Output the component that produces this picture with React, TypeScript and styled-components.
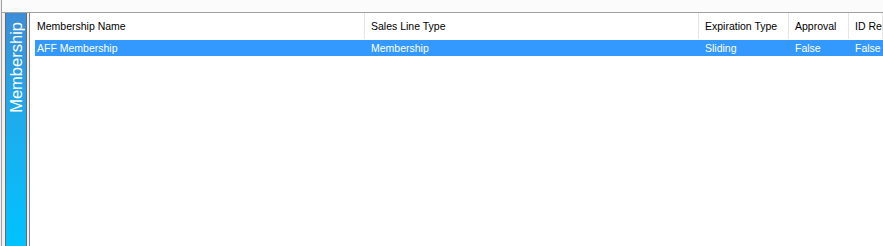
import styled, { createGlobalStyle } from "styled-components";

const GlobalStyle = createGlobalStyle`
  html, body {
    margin: 0;
    padding: 0;
    background: #f0f0f0;
  }
  body {
    font-family: "Liberation Sans", Arial, sans-serif;
  }
`;

const Frame = styled.div`
  display: flex;
  flex-direction: column;
  width: 882px;
  height: 246px;
  margin-left: 1px;
  border-left: 1px solid #a0a0a0;
  box-sizing: border-box;
  overflow: hidden;
`;

const TopBand = styled.div`
  height: 12px;
  background: #fbfbfb;
  border-bottom: 1px solid #a0a0a0;
`;

const Body = styled.div`
  flex: 1;
  display: flex;
  padding-left: 3px;
  gap: 2px;
  min-height: 0;
`;

const SideTab = styled.div`
  width: 20px;
  border-left: 1px solid #6a6a6a;
  border-right: 1px solid #6a6a6a;
  background: linear-gradient(to bottom, #3c8ed8 0%, #1fabec 45%, #00c3ff 100%);
  display: flex;
  justify-content: center;
  align-items: flex-start;
  padding-top: 9px;
`;

const SideLabel = styled.span`
  writing-mode: vertical-rl;
  transform: rotate(180deg);
  color: #ffffff;
  font-size: 16.5px;
  line-height: 20px;
  white-space: nowrap;
`;

const ListPanel = styled.div`
  flex: 1;
  background: #ffffff;
  border-left: 1px solid #828790;
  overflow: hidden;
`;

const HeaderRow = styled.div`
  display: grid;
  grid-template-columns: 334px 334px 90px 60px 1fr;
  height: 26px;
  margin-left: 1px;
`;

const HeaderCell = styled.div`
  display: flex;
  align-items: center;
  padding-left: 6px;
  border-right: 1px solid #e5e5e5;
  font-size: 10.5px;
  color: #000;
  white-space: nowrap;
  overflow: hidden;
`;

const ItemRow = styled.div<{ $selected?: boolean }>`
  display: grid;
  grid-template-columns: 330px 334px 90px 60px 1fr;
  height: 16px;
  margin: 1px 0 0 5px;
  background: ${(p) => (p.$selected ? "#3399ff" : "transparent")};
  color: ${(p) => (p.$selected ? "#ffffff" : "#000000")};
`;

const ItemCell = styled.div<{ $first?: boolean }>`
  display: flex;
  align-items: center;
  padding-left: ${(p) => (p.$first ? "2px" : "6px")};
  font-size: 10.5px;
  white-space: nowrap;
  overflow: hidden;
`;

const columns = ["Membership Name", "Sales Line Type", "Expiration Type", "Approval", "ID Required"];

const rows = [
  { name: "AFF Membership", lineType: "Membership", expiration: "Sliding", approval: "False", idRequired: "False" }
];

export default function App() {
  return (
    <>
      <GlobalStyle />
      <Frame>
        <TopBand />
        <Body>
          <SideTab>
            <SideLabel>Membership</SideLabel>
          </SideTab>
          <ListPanel>
            <HeaderRow>
              {columns.map((c) => (
                <HeaderCell key={c}>{c}</HeaderCell>
              ))}
            </HeaderRow>
            {rows.map((r) => (
              <ItemRow key={r.name} $selected>
                <ItemCell $first>{r.name}</ItemCell>
                <ItemCell>{r.lineType}</ItemCell>
                <ItemCell>{r.expiration}</ItemCell>
                <ItemCell>{r.approval}</ItemCell>
                <ItemCell>{r.idRequired}</ItemCell>
              </ItemRow>
            ))}
          </ListPanel>
        </Body>
      </Frame>
    </>
  );
}
